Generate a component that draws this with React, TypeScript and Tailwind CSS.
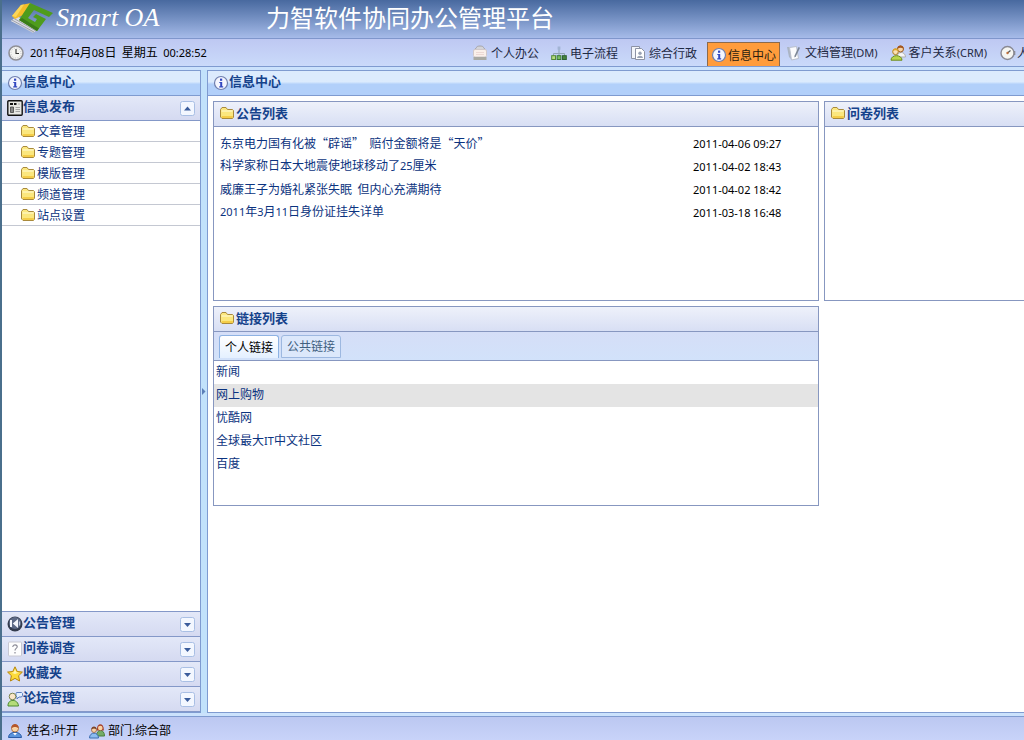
import { useState } from "react";
import type { ReactNode } from "react";

const LATIN = /([A-Za-z0-9:()\-]+)/;

/* Latin runs are set one step smaller than the Chinese text around them. */
function Mixed({ text }: { text: string }) {
  return (
    <>
      {text.split(LATIN).map((part, i) =>
        i % 2 === 1 ? (
          <span key={i} className="font-['Noto_Sans',sans-serif] text-[11px]">
            {part}
          </span>
        ) : (
          part
        ),
      )}
    </>
  );
}

function Icon({ children }: { children: ReactNode }) {
  return (
    <svg viewBox="0 0 16 16" className="h-4 w-4 shrink-0" aria-hidden="true">
      {children}
    </svg>
  );
}

const InfoIcon = () => (
  <Icon>
    <circle cx="8" cy="8" r="6.5" fill="#f4f6ff" stroke="#6f7fae" strokeWidth="1.2" />
    <rect x="7" y="3.6" width="2.2" height="2.2" fill="#3348c0" />
    <path d="M6.3 7h2.9v4.2h1v1.2H6.2v-1.2h1V8.1h-.9z" fill="#3348c0" />
  </Icon>
);

const FolderIcon = () => (
  <Icon>
    <path d="M1.5 12V4.500l1.500-2h4l1.500 2h5l1 1V12l-1 1.500H3z" fill="#fbe77e" stroke="#a98a3c" />
    <path d="M2.500 6.500h11v-1h-11z" fill="#fffbd8" />
    <path d="M2.800 11h11v2h-11z" fill="#f5cd48" />
  </Icon>
);

const ClockIcon = () => (
  <Icon>
    <circle cx="8" cy="8" r="7" fill="#f4f4f2" stroke="#8f8f96" strokeWidth="1.6" />
    <circle cx="8" cy="8" r="5" fill="none" stroke="#b9b9c2" strokeWidth="0.9" strokeDasharray="1 1.6" />
    <path d="M8 4v4.500h3" fill="none" stroke="#333" strokeWidth="1.1" />
  </Icon>
);

const GaugeIcon = () => (
  <Icon>
    <circle cx="7.5" cy="8" r="6.5" fill="#f6f6f2" stroke="#8a8a94" strokeWidth="1.4" />
    <path d="M7.5 8l3-2.500" stroke="#555" strokeWidth="1.2" />
    <circle cx="7.5" cy="8" r="1.2" fill="#c0703a" />
    <path d="M14.500 6v4" stroke="#8a8a94" strokeWidth="1.6" />
  </Icon>
);

const NewsIcon = () => (
  <Icon>
    <rect x="0.8" y="0.8" width="14.4" height="14.4" rx="1" fill="#e8e8e4" stroke="#111" strokeWidth="1.4" />
    <path d="M3 4h3M7 4h2.500" stroke="#111" strokeWidth="1.800" />
    <path d="M3.500 7h3v5.500h-3z" fill="#888" stroke="#444" strokeWidth=".8" />
    <path d="M8.500 7.500h4.500M8.500 9.500h4.500M8.500 11.500h4.500M11 4h2" stroke="#a4a4a4" />
  </Icon>
);

const DeskIcon = () => (
  <Icon>
    <path d="M4.500 2.500c0-2 7-2 7 0l2.500 3H2z" fill="#d4d4d8" stroke="#a4a4aa" />
    <rect x="1.500" y="4.500" width="13" height="7.500" rx="1.500" fill="#faf0ea" stroke="#d0c8ca" />
    <path d="M1.500 12h13v3h-13z" fill="#a9aaa4" />
    <path d="M4 7.500h8M4 9.500h8" stroke="#ecd8d4" />
  </Icon>
);

const FlowIcon = () => (
  <Icon>
    <path d="M8 4v4M2.500 11V8.500h11V11M8 8v3" fill="none" stroke="#8fa3b4" />
    <rect x="6.600" y="1.500" width="2.800" height="3.200" fill="#a2b4d4" />
    <rect x="0.7" y="10.700" width="3.800" height="3.800" fill="#b8dc82" stroke="#548a35" />
    <rect x="6.100" y="10.700" width="3.800" height="3.800" fill="#7cbf62" stroke="#3b7a35" />
    <rect x="11.500" y="10.700" width="3.800" height="3.800" fill="#47853f" stroke="#2f6334" />
  </Icon>
);

const PagesIcon = () => (
  <Icon>
    <path d="M1.500 1.500h8v12h-8z" fill="#f3f5fa" stroke="#8d93a5" />
    <path d="M5.500 3.500h6l3 3v8h-9z" fill="#fff" stroke="#8d93a5" />
    <circle cx="10" cy="8.300" r="1.700" fill="#9aa3b5" />
    <path d="M7 13c.3-3 5.700-3 6 0z" fill="#9aa3b5" />
  </Icon>
);

const NotesIcon = () => (
  <Icon>
    <path d="M1 2h2l2 3v9L3 12z" fill="#aab4c4" />
    <path d="M3.500 2.500l7-1 2 12-7 1.500z" fill="#fbfbfd" stroke="#b9bfcc" />
    <path d="M12.500 2l1.500.8-4 8.500-1.700 1.200.3-2z" fill="#7d8797" />
  </Icon>
);

const PeopleIcon = () => (
  <Icon>
    <path d="M7 12c0-6 8.500-6 8.500 0z" fill="#f6f6f6" stroke="#b0b0b0" />
    <circle cx="10.500" cy="4" r="3" fill="#f6d3a6" stroke="#9a5a1e" />
    <path d="M7.300 3.800c0-4.500 6.400-4.500 6.400 0-2-1.500-4.400-1.500-6.400 0z" fill="#a5551c" />
    <circle cx="5.500" cy="6.800" r="2.800" fill="#fae0b4" stroke="#b08020" />
    <path d="M2.600 6.300c.3-4 5.500-4 5.800 0-2-1.500-4-1.500-5.800 0z" fill="#dca62c" />
    <path d="M1 15.200c0-6 11-6 11 0z" fill="#b9d64c" stroke="#6d8c1e" />
  </Icon>
);

const HornIcon = () => (
  <Icon>
    <circle cx="8" cy="8" r="7.500" fill="#343c4e" />
    <circle cx="8" cy="7" r="6" fill="#5d6a86" />
    <path d="M3 4h2v7H3zM11 3L5.800 7.500 11 12z" fill="#f4f6fb" />
    <path d="M12.500 5.500v4" fill="none" stroke="#c4cce0" strokeWidth="1.200" />
  </Icon>
);

const QuestionIcon = () => (
  <Icon>
    <rect x="1.500" y="1" width="13" height="14" rx="1" fill="#fdfdfd" stroke="#c8c8d2" />
    <path d="M5.800 6c0-3 4.800-2.600 4.400 0-.3 1.500-2.200 1.400-2.200 3.500M8 11v1.500" fill="none" stroke="#8a8a96" strokeWidth="1.200" />
  </Icon>
);

const StarIcon = () => (
  <Icon>
    <path d="M8 .8l2.200 4.700 5.200.6-3.800 3.600 1 5.300L8 12.400 3.400 15l1-5.300L.6 6.100l5.200-.6z" fill="#fddb3a" stroke="#b8860b" />
    <path d="M8 3l1.300 3.200 2.700.4L8 8 4.500 6.700l2.300-.5z" fill="#fff6b0" />
  </Icon>
);

const ForumIcon = () => (
  <Icon>
    <path d="M9.500 1.500h5l1 1v2l-1 1.500H12l-2 2V6l-1-1V2z" fill="#e3f0ff" stroke="#5c7fc0" />
    <circle cx="5.500" cy="5.500" r="3.300" fill="#fae6c8" stroke="#7c8450" />
    <path d="M1 15c-.5-7.500 10-7.500 10.500 0z" fill="#b4dc7a" stroke="#4c8a30" />
  </Icon>
);

const UserIcon = () => (
  <Icon>
    <path d="M1.500 14.500C1.500 7.500 14.500 7.500 14.500 14.500z" fill="#5b94dc" stroke="#2c5ca8" />
    <path d="M6 10l2 2.500L10 10z" fill="#fff" />
    <circle cx="8" cy="5.500" r="3.500" fill="#f9d3a4" stroke="#a0602c" strokeWidth=".8" />
    <path d="M4.300 5.500C4-.5 12-.5 11.700 5.500 10 3.500 6 3.500 4.300 5.500z" fill="#b5562a" />
  </Icon>
);

const GroupIcon = () => (
  <Icon>
    <path d="M7.500 13C7.500 5.500 15.500 5.500 15.500 13z" fill="#74ac68" stroke="#48803c" />
    <path d="M8 7.500C7-1 15.500-1 14.800 7.500z" fill="#a5402c" />
    <circle cx="11.300" cy="5" r="2.300" fill="#f9d3a4" />
    <path d="M.5 15c0-6.500 9-6.500 9 0z" fill="#8cbcf0" stroke="#3f6eb0" />
    <circle cx="5" cy="7" r="2.500" fill="#f9d3a4" stroke="#8c5030" strokeWidth=".7" />
    <path d="M2.300 6.500c0-4 5.400-4 5.400 0-1.800-1.200-3.600-1.200-5.400 0z" fill="#7c4428" />
  </Icon>
);

function Logo() {
  return (
    <svg viewBox="0 0 44 32" className="h-8 w-11 shrink-0" aria-hidden="true">
      <path d="M1 19l22 12 4-3L7 15z" fill="#c9cbd4" />
      <path d="M1 19l6-5 22 13-5 3z" fill="#dcdee4" />
      <path d="M2 18l22 12M4 16.500L26 29" stroke="#8f929e" strokeWidth=".8" />
      <path d="M2 14L11 3l10-2-8 12-8 4z" fill="#f5bd2a" />
      <path d="M2 14L11 3l3-.6L6 15z" fill="#fbd65a" />
      <path d="M20 1l23 10-4 4-15-7-6 8 7 4 2-3-4-2 3-3 10 5-9 12-18-11z" fill="#4f9c1c" />
      <path d="M9 18l18 11 2-2.500L12 16z" fill="#3b7c18" />
    </svg>
  );
}

const NAV = [
  { label: "个人办公", icon: <DeskIcon /> },
  { label: "电子流程", icon: <FlowIcon /> },
  { label: "综合行政", icon: <PagesIcon /> },
  { label: "信息中心", icon: <InfoIcon /> },
  { label: "文档管理(DM)", icon: <NotesIcon /> },
  { label: "客户关系(CRM)", icon: <PeopleIcon /> },
];

const MENU = ["文章管理", "专题管理", "模版管理", "频道管理", "站点设置"];

const SECTIONS = [
  { label: "公告管理", icon: <HornIcon /> },
  { label: "问卷调查", icon: <QuestionIcon /> },
  { label: "收藏夹", icon: <StarIcon /> },
  { label: "论坛管理", icon: <ForumIcon /> },
];

const NOTICES = [
  { title: "东京电力国有化被“辟谣”  赔付金额将是“天价”", date: "2011-04-06 09:27" },
  { title: "科学家称日本大地震使地球移动了25厘米", date: "2011-04-02 18:43" },
  { title: "威廉王子为婚礼紧张失眠  但内心充满期待", date: "2011-04-02 18:42" },
  { title: "2011年3月11日身份证挂失详单", date: "2011-03-18 16:48" },
];

const LINKS = ["新闻", "网上购物", "忧酷网", "全球最大IT中文社区", "百度"];

function Bar({ icon, children }: { icon: ReactNode; children: ReactNode }) {
  return (
    <div className="flex h-[25px] shrink-0 items-center border-b border-[#7f9bd0] bg-linear-to-b from-[#dcebfd] from-45% to-[#b2d0fa] to-55% pl-[5px]">
      {icon}
      <h2 className="pb-1 text-[13px] font-bold text-[#15428b]">{children}</h2>
    </div>
  );
}

function SectionRow({ icon, label, open }: { icon: ReactNode; label: string; open?: boolean }) {
  return (
    <button
      type="button"
      aria-expanded={open ?? false}
      className="flex h-[25px] w-full shrink-0 items-center border-b border-[#8498c8] bg-linear-to-b from-[#e3e8f8] to-[#d5daf1] pr-[5px] pl-[5px] text-left"
    >
      {icon}
      <span className="flex-1 pb-1 text-[13px] font-bold text-[#15428b]">{label}</span>
      <svg viewBox="0 0 15 15" className="h-[15px] w-[15px]" aria-hidden="true">
        <rect x="0.5" y="0.5" width="14" height="14" rx="2" fill="#f3f7ff" stroke="#a9bfe4" />
        <path d={open ? "M4 9.500h7L7.500 5.500z" : "M4 6h7L7.500 10z"} fill="#3a5c9c" />
      </svg>
    </button>
  );
}

function Panel({ title, className, children }: { title: string; className: string; children?: ReactNode }) {
  return (
    <section className={`flex flex-col border-[#8797c0] bg-white ${className}`}>
      <div className="flex h-[25px] shrink-0 items-center gap-px border-b border-[#8797c0] bg-linear-to-b from-[#eef1fa] to-[#d8dff4] pb-[2px] pl-[5px]">
        <FolderIcon />
        <h3 className="text-[13px] font-bold text-[#15428b]">{title}</h3>
      </div>
      {children}
    </section>
  );
}

export default function App() {
  const [tab, setTab] = useState(0);
  return (
    <div className="flex min-h-screen flex-col overflow-hidden border-l-2 border-[#4a6f8c] bg-[#cbe2fc] font-['Noto_Sans_CJK_SC',sans-serif] text-[12px] leading-4 text-black">
      <header className="flex h-[39px] shrink-0 items-center overflow-hidden border-b border-[#7f96cc] bg-linear-to-b from-[#48699f] to-[#a6bbe9] pb-[2px] pl-2 whitespace-nowrap text-white">
        <Logo />
        <span className="w-[212px] pl-[2px] font-['Liberation_Serif',serif] text-[26px] leading-8 italic">Smart OA</span>
        <h1 className="pb-[2px] text-[24px] leading-8">力智软件协同办公管理平台</h1>
      </header>

      <div className="flex h-7 shrink-0 items-center border-b border-[#7f9bd0] bg-linear-to-b from-[#bec8f2] to-[#cadafa] pl-[6px] whitespace-nowrap">
        <ClockIcon />
        <time className="pl-[6px] whitespace-pre">
          <Mixed text="2011年04月08日  星期五  00:28:52" />
        </time>
        <nav className="ml-auto flex h-full items-center text-[#1f2a44]">
          {NAV.map((item) => (
            <a
              key={item.label}
              href="#"
              className={
                item.label === "信息中心"
                  ? "ml-1 flex h-6 items-center gap-px self-end border border-b-0 border-[#8c6a4c] bg-[#ff9c3c] px-[3px] text-[#2a1c10]"
                  : "flex items-center gap-[3px] px-[6px]"
              }
            >
              {item.icon}
              <span>
                <Mixed text={item.label} />
              </span>
            </a>
          ))}
          <a href="#" className="ml-[7px] flex w-6 items-center gap-px overflow-hidden">
            <GaugeIcon />
            <span>人</span>
          </a>
        </nav>
      </div>

      <div className="flex min-h-0 flex-1 pt-[3px]">
        <aside className="flex w-[199px] shrink-0 flex-col border-t border-r border-b border-[#7f9bd0] bg-white">
          <Bar icon={<InfoIcon />}>信息中心</Bar>
          <SectionRow icon={<NewsIcon />} label="信息发布" open />
          <ul className="flex-1">
            {MENU.map((label) => (
              <li key={label} className="h-[21px] border-b border-[#c4c8d2]">
                <a href="#" className="flex h-full items-center pb-px pl-[18px] text-[#0b3380]">
                  <FolderIcon />
                  <span className="pl-px">{label}</span>
                </a>
              </li>
            ))}
          </ul>
          <div className="border-t border-[#8498c8]">
            {SECTIONS.map((s) => (
              <SectionRow key={s.label} icon={s.icon} label={s.label} />
            ))}
          </div>
        </aside>

        <div className="flex w-[6px] shrink-0 items-center justify-center bg-[#c2e2fb]">
          <svg viewBox="0 0 4 7" className="h-[7px] w-1" aria-hidden="true">
            <path d="M0 0l3.500 3.500L0 7z" fill="#5b7fb8" />
          </svg>
        </div>

        <main className="flex min-w-0 flex-1 flex-col border-t border-b border-l border-[#7f9bd0] bg-white">
          <Bar icon={<InfoIcon />}>信息中心</Bar>
          <div className="flex gap-[5px] pt-[5px] pl-[5px]">
            <div className="flex min-w-0 flex-1 flex-col gap-[5px]">
              <Panel title="公告列表" className="min-h-[200px] border">
                <table className="mt-1 w-full table-fixed text-left">
                  <tbody>
                    {NOTICES.map((n) => (
                      <tr key={n.title} className="h-[23px]">
                        <td className="p-0 pl-[6px] whitespace-pre">
                          <a href="#" className="text-[#0b3380]">
                            <Mixed text={n.title} />
                          </a>
                        </td>
                        <td className="w-[125px] p-0 pt-[2px] font-['Noto_Sans',sans-serif] text-[11px]">{n.date}</td>
                      </tr>
                    ))}
                  </tbody>
                </table>
              </Panel>

              <Panel title="链接列表" className="min-h-[200px] border">
                <div className="flex h-[29px] shrink-0 items-end gap-[2px] border-b border-[#8797c0] bg-linear-to-b from-[#d5def7] to-[#d2e2fa] pl-[5px]">
                  {["个人链接", "公共链接"].map((label, i) => (
                    <button
                      key={label}
                      type="button"
                      onClick={() => setTab(i)}
                      className={
                        tab === i
                          ? "mb-[2px] h-[23px] rounded-t-[3px] border border-b-0 border-[#8db2e3] bg-linear-to-b from-white to-[#e4f0ff] px-[5px] pb-px text-black"
                          : "mb-[2px] h-[23px] rounded-t-[3px] border border-[#9db8e0] bg-[#dce8fb] px-[5px] pb-px text-[#416080]"
                      }
                    >
                      {label}
                    </button>
                  ))}
                </div>
                <ul>
                  {LINKS.map((label, i) => (
                    <li key={label} className={i === 1 ? "h-[23px] bg-[#e4e4e4]" : "h-[23px]"}>
                      <a href="#" className="flex h-full items-center pb-[3px] pl-[2px] text-[#0b3380]">
                        <span>
                          <Mixed text={label} />
                        </span>
                      </a>
                    </li>
                  ))}
                </ul>
              </Panel>
            </div>
            <div className="w-[200px] shrink-0">
              <Panel title="问卷列表" className="min-h-[200px] border-y border-l" />
            </div>
          </div>
        </main>
      </div>

      <footer className="mt-[3px] flex h-6 shrink-0 items-center border-t border-[#7f9bd0] bg-linear-to-b from-[#bcc8f1] to-[#c8d3f9] pt-[4px] pl-[5px]">
        <UserIcon />
        <span className="pr-[11px] pl-1">
          <Mixed text="姓名:叶开" />
        </span>
        <GroupIcon />
        <span className="pl-[3px]">
          <Mixed text="部门:综合部" />
        </span>
      </footer>
    </div>
  );
}
